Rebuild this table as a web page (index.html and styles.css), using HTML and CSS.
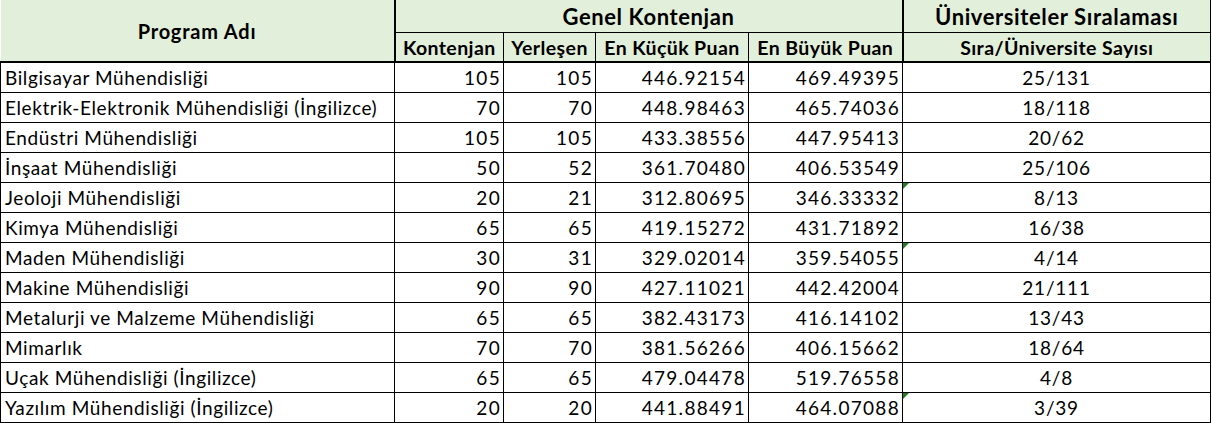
FILE: index.html
```html
<!DOCTYPE html>
<html lang="tr">
<head>
<meta charset="utf-8">
<link rel="stylesheet" href="styles.css">
</head>
<body>
<table class="sheet">
  <colgroup>
    <col class="c-name">
    <col class="c-kont">
    <col class="c-yer">
    <col class="c-min">
    <col class="c-max">
    <col class="c-rank">
  </colgroup>
  <thead>
    <tr class="h1">
      <th rowspan="2" class="h-name">Program Adı</th>
      <th colspan="4" class="h-group">Genel Kontenjan</th>
      <th class="h-group h-rank">Üniversiteler Sıralaması</th>
    </tr>
    <tr class="h2">
      <th>Kontenjan</th>
      <th>Yerleşen</th>
      <th>En Küçük Puan</th>
      <th>En Büyük Puan</th>
      <th class="h-rank">Sıra/Üniversite Sayısı</th>
    </tr>
  </thead>
  <tbody>
    <tr><td class="name">Bilgisayar Mühendisliği</td><td class="num">105</td><td class="num">105</td><td class="num">446.92154</td><td class="num">469.49395</td><td class="rank">25/131</td></tr>
    <tr><td class="name">Elektrik-Elektronik Mühendisliği (İngilizce)</td><td class="num">70</td><td class="num">70</td><td class="num">448.98463</td><td class="num">465.74036</td><td class="rank">18/118</td></tr>
    <tr><td class="name">Endüstri Mühendisliği</td><td class="num">105</td><td class="num">105</td><td class="num">433.38556</td><td class="num">447.95413</td><td class="rank">20/62</td></tr>
    <tr><td class="name">İnşaat Mühendisliği</td><td class="num">50</td><td class="num">52</td><td class="num">361.70480</td><td class="num">406.53549</td><td class="rank">25/106</td></tr>
    <tr><td class="name">Jeoloji Mühendisliği</td><td class="num">20</td><td class="num">21</td><td class="num">312.80695</td><td class="num">346.33332</td><td class="rank flag">8/13</td></tr>
    <tr><td class="name">Kimya Mühendisliği</td><td class="num">65</td><td class="num">65</td><td class="num">419.15272</td><td class="num">431.71892</td><td class="rank">16/38</td></tr>
    <tr><td class="name">Maden Mühendisliği</td><td class="num">30</td><td class="num">31</td><td class="num">329.02014</td><td class="num">359.54055</td><td class="rank flag">4/14</td></tr>
    <tr><td class="name">Makine Mühendisliği</td><td class="num">90</td><td class="num">90</td><td class="num">427.11021</td><td class="num">442.42004</td><td class="rank">21/111</td></tr>
    <tr><td class="name">Metalurji ve Malzeme Mühendisliği</td><td class="num">65</td><td class="num">65</td><td class="num">382.43173</td><td class="num">416.14102</td><td class="rank">13/43</td></tr>
    <tr><td class="name">Mimarlık</td><td class="num">70</td><td class="num">70</td><td class="num">381.56266</td><td class="num">406.15662</td><td class="rank">18/64</td></tr>
    <tr><td class="name">Uçak Mühendisliği (İngilizce)</td><td class="num">65</td><td class="num">65</td><td class="num">479.04478</td><td class="num">519.76558</td><td class="rank">4/8</td></tr>
    <tr><td class="name">Yazılım Mühendisliği (İngilizce)</td><td class="num">20</td><td class="num">20</td><td class="num">441.88491</td><td class="num">464.07088</td><td class="rank flag">3/39</td></tr>
  </tbody>
</table>
</body>
</html>
```
FILE: styles.css
```css
html, body {
  margin: 0;
  padding: 0;
  background: #ffffff;
}

body {
  font-family: Lato, "Open Sans", "DejaVu Sans", sans-serif;
  color: #000000;
}

.sheet {
  border-collapse: collapse;
  table-layout: fixed;
  width: 1210px;
}

.c-name { width: 394px; }
.c-kont { width: 109px; }
.c-yer  { width: 92px; }
.c-min  { width: 153px; }
.c-max  { width: 154px; }
.c-rank { width: 308px; }

.sheet th {
  background: #e2efda;
  font-weight: 700;
  padding: 0 2px;
  border: 1px solid #000;
  white-space: nowrap;
  text-align: center;
}

.sheet thead tr:first-child th {
  border-top: none;
}

.h1 th {
  height: 32px;
  font-size: 22px;
  letter-spacing: 0.6px;
}

.h2 th {
  height: 28px;
  font-size: 19.5px;
  letter-spacing: 0.4px;
  border-bottom: 2px solid #000;
}

.sheet .h-name {
  font-size: 20px;
  letter-spacing: 0.8px;
  border-left: none;
  border-right: 2px solid #000;
  border-bottom: 2px solid #000;
}

.sheet .h-rank {
  border-left: 2px solid #000;
}

.sheet td {
  height: 29px;
  padding: 0 4px;
  border: 1px solid #000;
  font-size: 19px;
  white-space: nowrap;
  overflow: hidden;
}

.name {
  text-align: left;
  padding-left: 5px;
  letter-spacing: 0.6px;
}

.num {
  text-align: right;
  letter-spacing: 1.3px;
}

.sheet .num {
  padding-right: 2px;
}

.rank {
  text-align: center;
  letter-spacing: 0.8px;
}

.flag {
  position: relative;
}

.flag::before {
  content: "";
  position: absolute;
  top: 0;
  left: 0;
  width: 0;
  height: 0;
  border-top: 6px solid #1f7d1f;
  border-right: 6px solid transparent;
}
```
